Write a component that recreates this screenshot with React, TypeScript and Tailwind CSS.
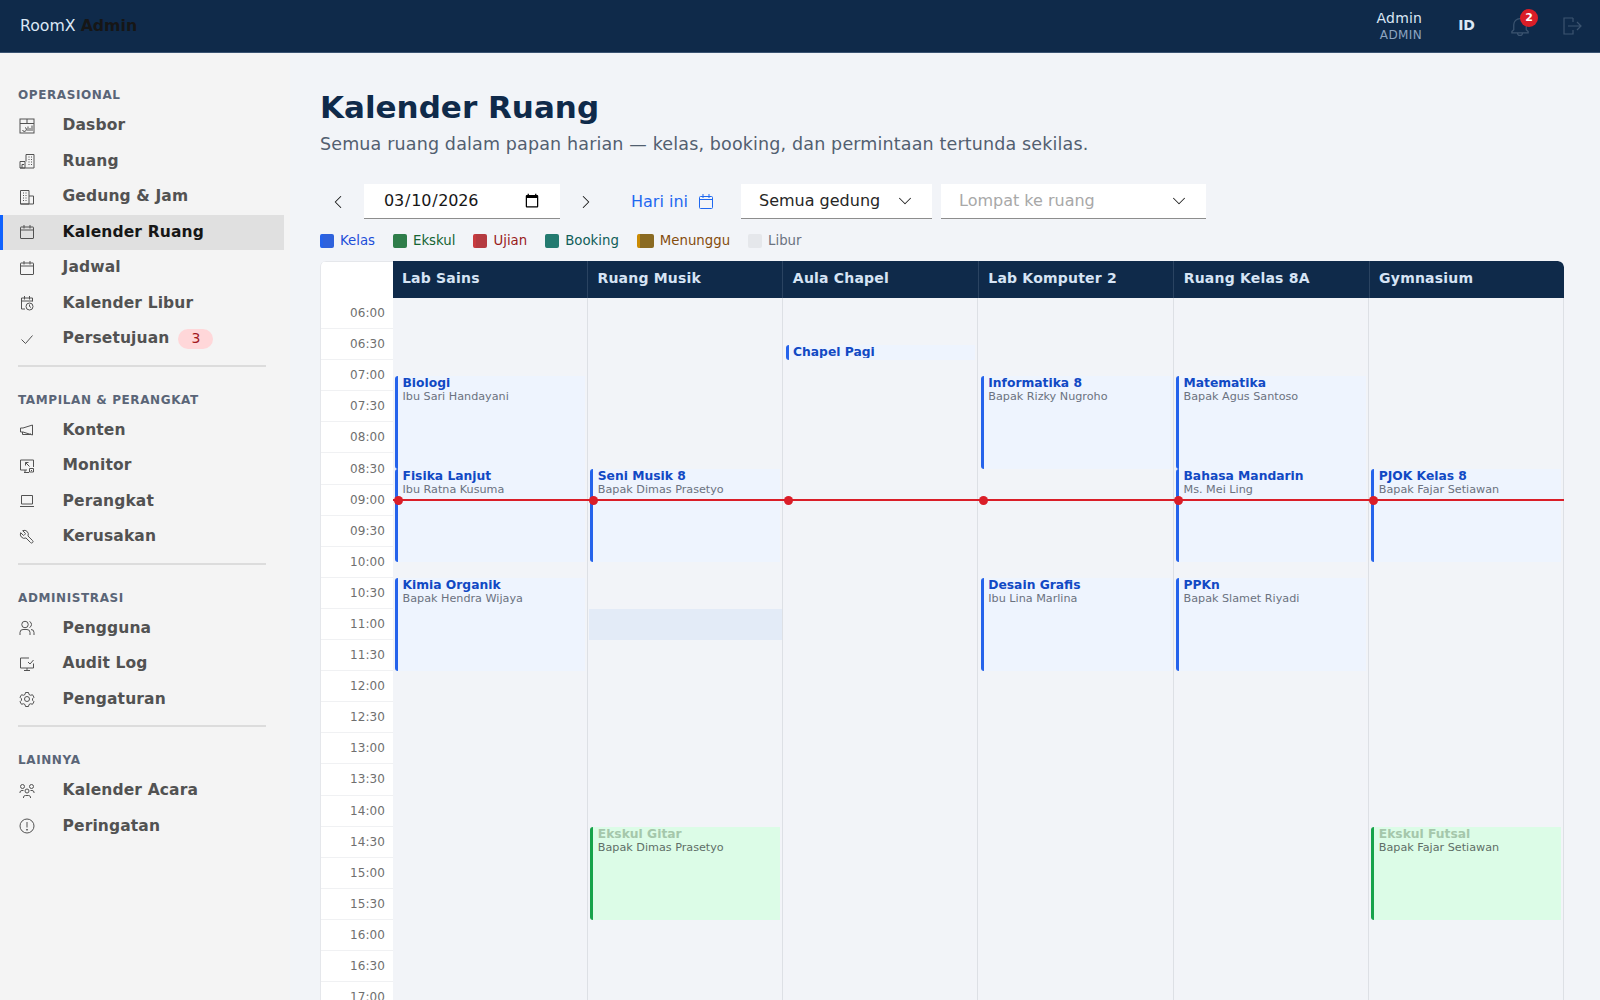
import React from "react";
import { ChevronLeft, ChevronRight, ChevronDown } from "lucide-react";

const I = ({ children }: { children: React.ReactNode }) => (
  <svg width="16" height="16" viewBox="0 0 32 32" fill="none" stroke="currentColor" strokeWidth="2" className="shrink-0">
    {children}
  </svg>
);

const Cal = () => (
  <I>
    <rect x="3" y="6" width="26" height="23" rx="1" />
    <path d="M3 12h26M10 2v7M22 2v7" />
  </I>
);

const icons: Record<string, React.ReactNode> = {
  dash: (
    <I>
      <rect x="2" y="2" width="28" height="28" />
      <path d="M2 11h28M16 2v9M7 24a4 4 0 1 0 5-5M18 17v9M22 20v6M26 15v11" />
    </I>
  ),
  room: (
    <I>
      <path d="M2 30V17h10v13zM2 30h28V3H14v14M6 30v-7h4M19 8h2M24 8h2M19 13h2M24 13h2M19 18h2M24 18h2M19 23h2M24 23h2" />
    </I>
  ),
  bld: (
    <I>
      <path d="M3 30V3h17v27zM20 14h9v16H3M8 8h2M13 8h2M8 13h2M13 13h2M8 18h2M13 18h2M8 23h2M13 23h2" />
    </I>
  ),
  cal: <Cal />,
  hol: (
    <I>
      <path d="M12 28H5V6h22v7M5 12h22M11 2v7M21 2v7" />
      <circle cx="21" cy="23" r="7" />
      <path d="M21 19v4l3 2" />
    </I>
  ),
  check: (
    <I>
      <path d="M5 17l8 8L27 9" />
    </I>
  ),
  cont: (
    <I>
      <path d="M27 6L8 12H3v8h5l19 6zM7 20v5h16v-2" />
    </I>
  ),
  mon: (
    <I>
      <path d="M16 24H3V4h26v14M12 24v5h6M10 29h10M13 9h6M13 9v6M13 9l8 8M21 21h8v7h-8zM24 25h2" />
    </I>
  ),
  dev: (
    <I>
      <path d="M5 5h22v17H5zM2 27h28" />
    </I>
  ),
  wrench: (
    <svg width="16" height="16" viewBox="0 0 24 24" fill="none" stroke="currentColor" strokeWidth="1.500" className="shrink-0">
      <path
        transform="translate(24 0) scale(-1 1)"
        d="M14.700 6.300a1 1 0 0 0 0 1.400l1.600 1.600a1 1 0 0 0 1.400 0l3.770-3.770a6 6 0 0 1-7.940 7.940l-6.910 6.910a2.120 2.120 0 0 1-3-3l6.910-6.910a6 6 0 0 1 7.940-7.940l-3.760 3.760z"
      />
    </svg>
  ),
  users: (
    <I>
      <circle cx="12" cy="9" r="6.500" />
      <path d="M2 30v-5a6 6 0 0 1 6-6h8a6 6 0 0 1 6 6v5M21 3a6.500 6.500 0 0 1 0 12M24 19a6 6 0 0 1 6 6v5" />
    </I>
  ),
  audit: (
    <I>
      <path d="M20 4H3v20h26v-9M16 24v5M10 29h12M18 12l4 4 7-8" />
    </I>
  ),
  gear: (
    <I>
      <path d="M13 3h6l1 4 3 1.500 4-1 3 5-3 3v3l3 3-3 5-4-1-3 1.500-1 4h-6l-1-4-3-1.500-4 1-3-5 3-3v-3l-3-3 3-5 4 1 3-1.500z" />
      <circle cx="16" cy="16" r="5" />
    </I>
  ),
  event: (
    <I>
      <circle cx="7" cy="7" r="4" />
      <circle cx="25" cy="7" r="4" />
      <circle cx="16" cy="16" r="4" />
      <path d="M2 20v-2a4 4 0 0 1 4-3h3M30 20v-2a4 4 0 0 0-4-3h-3M9 30v-2a4 4 0 0 1 4-3h6a4 4 0 0 1 4 3v2" />
    </I>
  ),
  warn: (
    <I>
      <circle cx="16" cy="16" r="14" />
      <path d="M16 8v11" />
      <circle cx="16" cy="23.500" r="1" fill="currentColor" />
    </I>
  ),
};

type Item = { l: string; i: string; active?: boolean; badge?: string };
const sections: { t: string; items: Item[] }[] = [
  {
    t: "OPERASIONAL",
    items: [
      { l: "Dasbor", i: "dash" },
      { l: "Ruang", i: "room" },
      { l: "Gedung & Jam", i: "bld" },
      { l: "Kalender Ruang", i: "cal", active: true },
      { l: "Jadwal", i: "cal" },
      { l: "Kalender Libur", i: "hol" },
      { l: "Persetujuan", i: "check", badge: "3" },
    ],
  },
  {
    t: "TAMPILAN & PERANGKAT",
    items: [
      { l: "Konten", i: "cont" },
      { l: "Monitor", i: "mon" },
      { l: "Perangkat", i: "dev" },
      { l: "Kerusakan", i: "wrench" },
    ],
  },
  {
    t: "ADMINISTRASI",
    items: [
      { l: "Pengguna", i: "users" },
      { l: "Audit Log", i: "audit" },
      { l: "Pengaturan", i: "gear" },
    ],
  },
  {
    t: "LAINNYA",
    items: [
      { l: "Kalender Acara", i: "event" },
      { l: "Peringatan", i: "warn" },
    ],
  },
];

const legend = [
  { l: "Kelas", box: "w-[14px] bg-[#2f62dc]", edge: "border-[#2563eb]", text: "text-[#1d4ed8]" },
  { l: "Ekskul", box: "w-[14px] bg-[#2f7d4a]", edge: "border-[#2f7d4a]", text: "text-[#166534]" },
  { l: "Ujian", box: "w-[14px] bg-[#b53a40]", edge: "border-[#c93a3f]", text: "text-[#991b1b]" },
  { l: "Booking", box: "w-[14px] bg-[#237a70]", edge: "border-[#237a70]", text: "text-[#115e59]" },
  { l: "Menunggu", box: "w-[17px] bg-[#8a6a22]", edge: "border-[#ca8a04]", text: "text-[#854d0e]" },
  { l: "Libur", box: "w-[14px] bg-[#e5e7eb]", edge: "border-[#e5e7eb]", text: "text-[#6b7280]" },
];

const times = [
  "06:00","06:30","07:00","07:30","08:00","08:30","09:00","09:30","10:00","10:30","11:00","11:30",
  "12:00","12:30","13:00","13:30","14:00","14:30","15:00","15:30","16:00","16:30","17:00",
];

const ROW = 31.1;
const offset = (t: number) => ROW / 2 + (t - 6) * 2 * ROW;

type Ev = { s: number; e: number; t: string; p?: string; g?: boolean };
const cols: { n: string; ev: Ev[]; hl?: boolean }[] = [
  {
    n: "Lab Sains",
    ev: [
      { s: 7, e: 8.5, t: "Biologi", p: "Ibu Sari Handayani" },
      { s: 8.5, e: 10, t: "Fisika Lanjut", p: "Ibu Ratna Kusuma" },
      { s: 10.25, e: 11.75, t: "Kimia Organik", p: "Bapak Hendra Wijaya" },
    ],
  },
  {
    n: "Ruang Musik",
    hl: true,
    ev: [
      { s: 8.5, e: 10, t: "Seni Musik 8", p: "Bapak Dimas Prasetyo" },
      { s: 14.25, e: 15.75, t: "Ekskul Gitar", p: "Bapak Dimas Prasetyo", g: true },
    ],
  },
  { n: "Aula Chapel", ev: [{ s: 6.5, e: 6.75, t: "Chapel Pagi" }] },
  {
    n: "Lab Komputer 2",
    ev: [
      { s: 7, e: 8.5, t: "Informatika 8", p: "Bapak Rizky Nugroho" },
      { s: 10.25, e: 11.75, t: "Desain Grafis", p: "Ibu Lina Marlina" },
    ],
  },
  {
    n: "Ruang Kelas 8A",
    ev: [
      { s: 7, e: 8.5, t: "Matematika", p: "Bapak Agus Santoso" },
      { s: 8.5, e: 10, t: "Bahasa Mandarin", p: "Ms. Mei Ling" },
      { s: 10.25, e: 11.75, t: "PPKn", p: "Bapak Slamet Riyadi" },
    ],
  },
  {
    n: "Gymnasium",
    ev: [
      { s: 8.5, e: 10, t: "PJOK Kelas 8", p: "Bapak Fajar Setiawan" },
      { s: 14.25, e: 15.75, t: "Ekskul Futsal", p: "Bapak Fajar Setiawan", g: true },
    ],
  },
];

const Sidebar = () => (
  <aside className="w-[290px] shrink-0 bg-[#f4f4f4] pt-[33px] pr-[6px]">
    {sections.map((s, i) => (
      <div key={s.t}>
        {i > 0 && <div className="ml-[18px] mr-[18px] w-[248px] h-[2px] bg-[#dcdcdc] mt-[8px] mb-[24px]" />}
        <div className="pl-[18px] text-[12px] leading-[18px] font-bold tracking-[0.6px] text-[#5a6577]">{s.t}</div>
        <div className="mt-[4px]">
          {s.items.map((it) => (
            <div
              key={it.l}
              className={
                "h-[35.500px] flex items-center border-l-[3px] pl-[16px] " +
                (it.active ? "border-[#0f62fe] bg-[#e0e0e0] text-[#161616]" : "border-transparent text-[#525252]")
              }
            >
              <span className="w-[43.500px] flex text-[#525252]">{icons[it.i]}</span>
              <span className="text-[15.500px] font-bold tracking-[0.13px]">{it.l}</span>
              {it.badge && (
                <span className="ml-[9px] h-[20px] w-[35px] rounded-full bg-[#ffd7d9] text-[#a2191f] text-[14px] flex items-center justify-center">
                  {it.badge}
                </span>
              )}
            </div>
          ))}
        </div>
      </div>
    ))}
  </aside>
);

const Header = () => (
  <header className="h-[53px] shrink-0 bg-[#0f2a4a] border-b border-[#3a5372] flex items-center pl-[20px] pr-[18px]">
    <div className="text-[15.750px] text-[#dbe7f5]">
      RoomX <span className="font-bold text-[#161616]">Admin</span>
    </div>
    <div className="ml-auto flex items-center">
      <div className="text-right mr-[36px] mt-[-1px]">
        <div className="text-[14px] leading-[18px] tracking-[0.2px] text-[#dbe7f5]">Admin</div>
        <div className="text-[12px] leading-[16px] text-[#8da4c0] tracking-[0.4px]">ADMIN</div>
      </div>
      <div className="text-[14px] font-bold text-[#dbe7f5] mr-[35px] mt-[-1px]">ID</div>
      <div className="relative w-[20px] h-[20px] mr-[32px] text-[#3c5470]">
        <svg width="20" height="20" viewBox="0 0 32 32" fill="none" stroke="currentColor" strokeWidth="2">
          <path d="M6 22l-3 3v2h26v-2l-3-3v-8a10 10 0 0 0-20 0zM12 27a4 4 0 0 0 8 0" />
        </svg>
        <span className="absolute left-[10px] top-[-7px] w-[18px] h-[18px] rounded-full bg-[#da1e28] text-white text-[11px] font-bold flex items-center justify-center">
          2
        </span>
      </div>
      <svg width="20" height="20" viewBox="0 0 20 20" fill="none" stroke="#3c5470" strokeWidth="1.200">
        <path d="M11 2H2v16h9v-4M11 6V2M6 10h13M15 6l4 4-4 4" />
      </svg>
    </div>
  </header>
);

const Toolbar = () => (
  <div className="mt-[28px] h-[36px] flex items-start">
    <div className="w-[44px] h-[35px] pl-[7px] flex items-center text-[#161616]">
      <ChevronLeft size={22} strokeWidth={1.100} />
    </div>
    <input
      type="date"
      defaultValue="2026-03-10"
      className="w-[196px] h-[35px] bg-white border-b border-[#8d8d8d] pl-[19px] pr-[18px] text-[16px] tracking-[-0.2px] text-[#161616] outline-none"
    />
    <div className="w-[52px] h-[35px] flex items-center justify-center text-[#161616]">
      <ChevronRight size={22} strokeWidth={1.100} />
    </div>
    <div className="w-[131px] h-[35px] ml-[-1px] pl-[20px] flex items-center text-[#1f68f0] text-[16px]">
      <span>Hari ini</span>
      <svg className="ml-[11px]" width="14" height="15" viewBox="0 0 14 15" fill="none" stroke="currentColor" strokeWidth="1">
        <rect x="0.500" y="2.500" width="13" height="12" rx="1" />
        <path d="M0.500 5.500h13M4 0v4M10 0v4" />
      </svg>
    </div>
    <div className="w-[191px] h-[35px] ml-[-1px] bg-white border-b border-[#8d8d8d] pl-[18px] pr-[16px] flex items-center justify-between text-[16px] text-[#262626]">
      <span>Semua gedung</span>
      <ChevronDown size={22} strokeWidth={1.100} />
    </div>
    <div className="w-[265px] h-[35px] ml-[9px] bg-white border-b border-[#8d8d8d] pl-[18px] pr-[16px] flex items-center justify-between text-[16px] text-[#a8a8a8]">
      <span className="mt-[-1px]">Lompat ke ruang</span>
      <ChevronDown size={22} strokeWidth={1.100} className="text-[#262626]" />
    </div>
  </div>
);

const Legend = () => (
  <div className="mt-[12px] h-[18px] flex items-center gap-[18px] text-[13.300px]">
    {legend.map((l) => (
      <div key={l.l} className="flex items-center gap-[6px]">
        <span className={"h-[14px] rounded-[2px] border-l-[3px] " + l.box + " " + l.edge} />
        <span className={l.text}>{l.l}</span>
      </div>
    ))}
  </div>
);

const Event = ({ ev }: { ev: Ev }) => (
  <div
    className={
      "absolute left-[2.500px] right-[2px] overflow-hidden rounded-l-[3px] border-l-[3px] pl-[4.500px] " +
      (ev.g ? "bg-[#dcfce7] border-[#16a34a]" : "bg-[#eef4fe] border-[#2563eb]")
    }
    style={{ top: offset(ev.s), height: (ev.e - ev.s) * 2 * ROW }}
  >
    <div
      className={
        "text-[12.300px] leading-[15px] font-bold whitespace-nowrap overflow-hidden " +
        (ev.p ? "h-[15px] " : "h-[13px] ") +
        (ev.g ? "text-[#a5c7ab]" : "text-[#1149c4]")
      }
    >
      {ev.t}
    </div>
    {ev.p && <div className={"text-[11.200px] leading-[12px] whitespace-nowrap " + (ev.g ? "text-[#5f6f68]" : "text-[#6b7280]")}>{ev.p}</div>}
  </div>
);

const Grid = () => (
  <div className="mt-[11px] flex-1 min-h-0 overflow-hidden rounded-t-[6px] border-l border-[#e5e7eb] mr-[36px]">
    <div className="flex h-[37px]">
      <div className="w-[71.500px] shrink-0 bg-white border-t border-[#e5e7eb]" />
      <div className="flex-1 flex bg-[#0f2a4a] rounded-tr-[6px]">
        {cols.map((c, i) => (
          <div
            key={c.n}
            className={
              "flex-1 min-w-0 flex items-center pl-[9.500px] pb-[3px] text-[14px] font-bold tracking-[0.2px] text-[#d6e4f5] " +
              (i < 5 ? "border-r border-[#2a4361]" : "")
            }
          >
            {c.n}
          </div>
        ))}
      </div>
    </div>
    <div className="flex">
      <div className="w-[71.500px] shrink-0 bg-white">
        {times.map((t) => (
          <div
            key={t}
            className="h-[31.100px] border-b border-[#f0f1f3] flex items-center justify-end pr-[7.500px] text-[12px] tracking-[0.1px] text-[#6f6f6f]"
          >
            {t}
          </div>
        ))}
      </div>
      <div className="relative flex-1 flex">
        {cols.map((c) => (
          <div key={c.n} className="relative flex-1 min-w-0 border-r border-[#dde0e5] h-[716px]">
            {c.hl && (
              <div className="absolute left-[1.500px] right-0 bg-[#e3ebf7]" style={{ top: offset(11) - ROW / 2, height: ROW }} />
            )}
            {c.ev.map((e) => (
              <Event key={e.t} ev={e} />
            ))}
          </div>
        ))}
        <div className="absolute left-0 right-0 h-[2px] bg-[#da1e28]" style={{ top: offset(9) - 1 }} />
        {[0, 1, 2, 3, 4, 5].map((i) => (
          <span
            key={i}
            className="absolute w-[9px] h-[9px] rounded-full bg-[#da1e28]"
            style={{ left: 1 + i * 195.15, top: offset(9) - 4.5 }}
          />
        ))}
      </div>
    </div>
  </div>
);

export default function App() {
  return (
    <div className="h-screen overflow-hidden flex flex-col bg-[#f2f4f8] font-['DejaVu_Sans',sans-serif]">
      <Header />
      <div className="flex flex-1 min-h-0">
        <Sidebar />
        <main className="flex-1 min-w-0 pl-[30px] flex flex-col">
          <h1 className="mt-[34px] text-[31px] leading-[40px] font-bold text-[#0f2a4a]">Kalender Ruang</h1>
          <p className="mt-[5px] text-[17.500px] leading-[24px] tracking-[0.15px] text-[#525f70]">
            Semua ruang dalam papan harian — kelas, booking, dan permintaan tertunda sekilas.
          </p>
          <Toolbar />
          <Legend />
          <Grid />
        </main>
      </div>
    </div>
  );
}
